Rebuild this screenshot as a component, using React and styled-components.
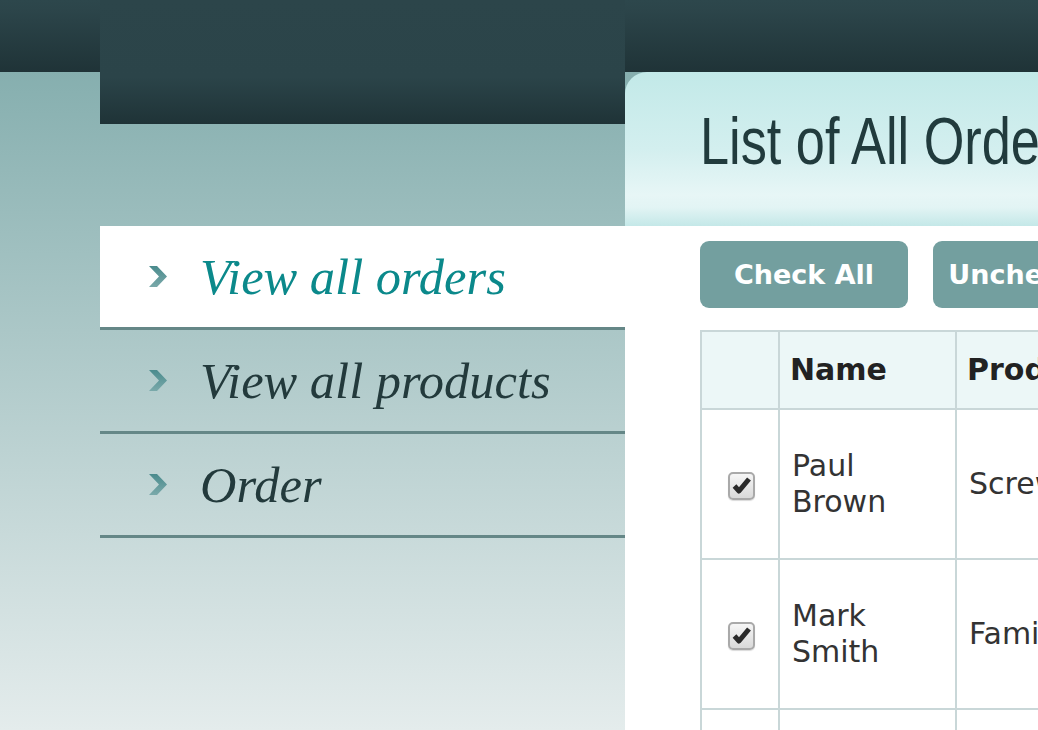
import React from "react";
import styled, { createGlobalStyle } from "styled-components";

const GlobalStyle = createGlobalStyle`
    html, body {
        margin: 0;
        padding: 0;
        overflow: hidden;
    }
    body {
        font-family: "DejaVu Sans", Verdana, sans-serif;
    }
`;

const Page = styled.div`
    display: flex;
    height: 100vh;
    padding-left: 100px;
    overflow: hidden;
    background: linear-gradient(180deg, #2d474c 0px, #2c454a 10px, #1f3337 72px, #86afaf 72px, #e4ecec 100%);
`;

const Sidebar = styled.aside`
    flex: 0 0 525px;
    display: flex;
    flex-direction: column;
`;

const Logo = styled.div`
    flex: none;
    height: 124px;
    background: linear-gradient(180deg, #2c454a 0%, #2b4449 62%, #1f3337 100%);
`;

const Nav = styled.nav`
    margin-top: 102px;
    display: flex;
    flex-direction: column;
`;

const NavItem = styled.a`
    display: flex;
    align-items: center;
    height: 101px;
    padding-left: 49px;
    border-bottom: 3px solid #658787;
    background: ${(p) => (p.$active ? "#ffffff" : "transparent")};
    color: ${(p) => (p.$active ? "#0b898b" : "#233a3c")};
    font-family: "Liberation Serif", "Times New Roman", serif;
    font-style: italic;
    font-size: 50.5px;
    text-decoration: none;
    cursor: pointer;
`;

const NavLabel = styled.span`
    margin-left: 33px;
`;

const Main = styled.main`
    flex: 0 0 1000px;
    display: flex;
    flex-direction: column;
    padding-top: 72px;
`;

const TitlePanel = styled.header`
    flex: none;
    height: 154px;
    box-sizing: border-box;
    padding: 35px 0 0 75px;
    border-top-left-radius: 22px;
    background: linear-gradient(180deg, #c2e9e8 0%, #d3efef 50%, #e7f6f6 80%, #e2f4f4 88%, #c4e8e8 100%);
`;

const Title = styled.h1`
    margin: 0;
    font-family: "Liberation Sans", Arial, sans-serif;
    font-weight: normal;
    font-size: 67px;
    line-height: 1;
    color: #213b3d;
    white-space: nowrap;
    transform: scaleX(0.78);
    transform-origin: left center;
`;

const Content = styled.section`
    flex: 1;
    background: #ffffff;
    padding: 15px 0 0 75px;
`;

const Toolbar = styled.div`
    display: flex;
    gap: 25px;
`;

const Button = styled.button`
    flex: none;
    width: 208px;
    height: 67px;
    padding: 0;
    border: none;
    border-radius: 9px;
    background-color: #739f9f;
    color: #ffffff;
    font-family: "DejaVu Sans", Verdana, sans-serif;
    font-weight: bold;
    font-size: 27px;
    text-align: center;
    white-space: nowrap;
    cursor: pointer;
`;

const Table = styled.table`
    margin-top: 22px;
    border-collapse: collapse;
    table-layout: fixed;
    width: 900px;
    font-family: "DejaVu Sans", Verdana, sans-serif;
    font-size: 30px;
    line-height: 36px;
    color: #333333;
`;

const Th = styled.th`
    height: 76px;
    padding: 0 10px;
    border: 2px solid #c9d7d8;
    background: #ecf7f7;
    text-align: left;
    font-weight: bold;
    color: #222222;
    white-space: nowrap;
    overflow: hidden;
`;

const Td = styled.td`
    height: 148px;
    padding: 0 10px 0 12px;
    border: 2px solid #c9d7d8;
    text-align: ${(p) => (p.$center ? "center" : "left")};
    vertical-align: middle;
    white-space: ${(p) => (p.$nowrap ? "nowrap" : "normal")};
    overflow: hidden;
`;

const CheckBox = styled.span`
    display: inline-flex;
    align-items: center;
    justify-content: center;
    width: 23px;
    height: 24px;
    border: 2px solid #a9a9a9;
    border-radius: 5px;
    background: linear-gradient(180deg, #f6f6f6, #d9d9d9);
    box-shadow: 0 1px 1px rgba(0, 0, 0, 0.15);
    vertical-align: middle;
`;

const Chevron = () => (
    <svg width="18" height="21" viewBox="0 0 18 21">
        <defs>
            <linearGradient id="chev" x1="0" y1="0" x2="0" y2="1">
                <stop offset="0" stopColor="#4a8b8d" />
                <stop offset="1" stopColor="#7aa9aa" />
            </linearGradient>
        </defs>
        <polygon points="0,0 8,0 18,10.5 8,21 0,21 10,10.5" fill="url(#chev)" />
    </svg>
);

const Check = () => (
    <CheckBox>
        <svg width="21" height="21" viewBox="0 0 21 21">
            <path d="M3.5 11 L8 16 L18 4" fill="none" stroke="#2a2a2a" strokeWidth="5" strokeLinejoin="round" />
        </svg>
    </CheckBox>
);

const navItems = [
    { label: "View all orders", active: true },
    { label: "View all products" },
    { label: "Order" },
];

const orders = [
    { name: "Paul Brown", product: "Screwdriver set", qty: 2, date: "2014-05-12" },
    { name: "Mark Smith", product: "Family pack", qty: 1, date: "2014-05-14" },
    { name: "Anna Green", product: "Hammer", qty: 3, date: "2014-05-15" },
];

const App = () => {
    return (
        <>
            <GlobalStyle />
            <Page>
                <Sidebar>
                    <Logo />
                    <Nav>
                        {navItems.map((item) => (
                            <NavItem key={item.label} $active={item.active}>
                                <Chevron />
                                <NavLabel>{item.label}</NavLabel>
                            </NavItem>
                        ))}
                    </Nav>
                </Sidebar>
                <Main>
                    <TitlePanel>
                        <Title>List of All Orders</Title>
                    </TitlePanel>
                    <Content>
                        <Toolbar>
                            <Button>Check All</Button>
                            <Button>Uncheck All</Button>
                        </Toolbar>
                        <Table>
                            <colgroup>
                                <col style={{ width: "78px" }} />
                                <col style={{ width: "177px" }} />
                                <col style={{ width: "300px" }} />
                                <col style={{ width: "150px" }} />
                                <col style={{ width: "195px" }} />
                            </colgroup>
                            <thead>
                                <tr>
                                    <Th />
                                    <Th>Name</Th>
                                    <Th>Product</Th>
                                    <Th>Quantity</Th>
                                    <Th>Date</Th>
                                </tr>
                            </thead>
                            <tbody>
                                {orders.map((o) => (
                                    <tr key={o.name}>
                                        <Td $center>
                                            <Check />
                                        </Td>
                                        <Td>{o.name}</Td>
                                        <Td $nowrap>{o.product}</Td>
                                        <Td $nowrap>{o.qty}</Td>
                                        <Td $nowrap>{o.date}</Td>
                                    </tr>
                                ))}
                            </tbody>
                        </Table>
                    </Content>
                </Main>
            </Page>
        </>
    );
};

export default App;
